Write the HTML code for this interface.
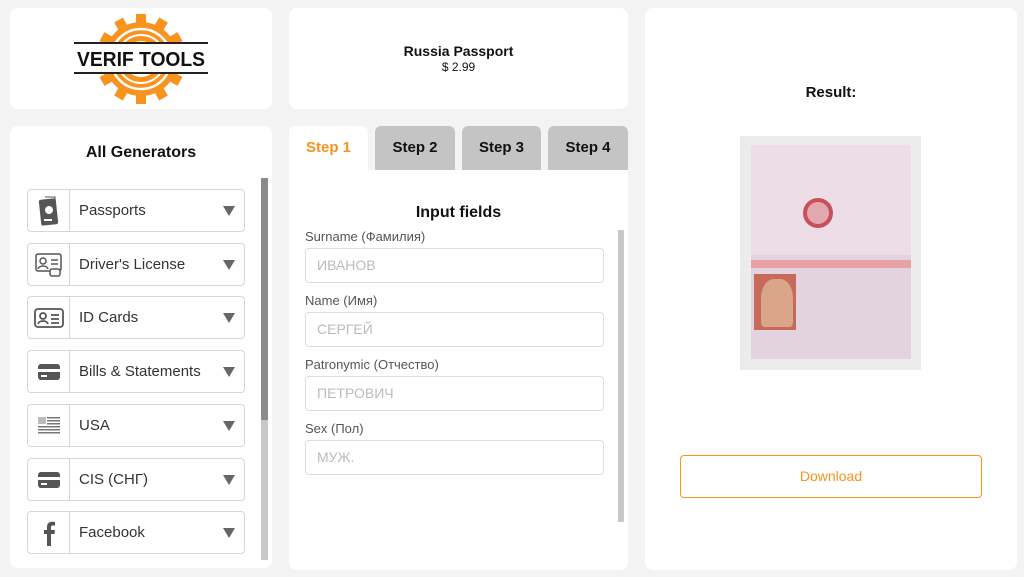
<!DOCTYPE html>
<html><head><meta charset="utf-8"><style>
*{box-sizing:border-box;margin:0;padding:0}
body{width:1024px;height:577px;background:#f3f3f3;font-family:"Liberation Sans",sans-serif;position:relative;overflow:hidden;color:#111}
.card{position:absolute;background:#fff;border-radius:8px}
.item{position:absolute;left:27px;width:218px;height:43px;border:1px solid #d6d6d6;border-radius:4px;background:#fff}
.item .ic{position:absolute;left:0;top:0;width:42px;height:41px;border-right:1px solid #d6d6d6;display:flex;align-items:center;justify-content:center}
.item .t{position:absolute;left:51px;top:12px;font-size:15px;color:#333}
.item .a{position:absolute;right:9px;top:16px;width:0;height:0;border-left:6px solid transparent;border-right:6px solid transparent;border-top:10px solid #666}
.tab{position:absolute;top:126px;height:44px;width:80px;background:#c4c4c4;border-radius:6px 6px 0 0;font-weight:bold;font-size:15px;text-align:center;line-height:44px}
.lbl{position:absolute;left:305px;font-size:13px;color:#555}
.inp{position:absolute;left:305px;width:299px;height:35px;border:1px solid #ddd;border-radius:4px;font-size:14px;color:#bbb;padding-left:11px;line-height:33px}
</style></head><body>
<div class="card" style="left:10px;top:8px;width:262px;height:101px">
<svg width="262" height="101" style="position:absolute;left:0;top:0">
<defs><rect id="t" x="-5" y="-45" width="10" height="10"/></defs>
<g transform="translate(131,51)" fill="#f7931e">
<circle r="37"/>
<use href="#t"/><use href="#t" transform="rotate(30)"/><use href="#t" transform="rotate(60)"/><use href="#t" transform="rotate(90)"/><use href="#t" transform="rotate(120)"/><use href="#t" transform="rotate(150)"/><use href="#t" transform="rotate(180)"/><use href="#t" transform="rotate(210)"/><use href="#t" transform="rotate(240)"/><use href="#t" transform="rotate(270)"/><use href="#t" transform="rotate(300)"/><use href="#t" transform="rotate(330)"/>
<circle r="30" fill="none" stroke="#fff" stroke-width="2.5"/>
<circle r="24" fill="none" stroke="#fff" stroke-width="2"/>
<circle r="18" fill="#fff"/>
</g>
<rect x="63" y="34" width="136" height="32" fill="#fff"/>
<rect x="64" y="34" width="134" height="2" fill="#222"/>
<rect x="64" y="64" width="134" height="2" fill="#222"/>
<text x="131" y="58" text-anchor="middle" font-family="Liberation Sans" font-weight="bold" font-size="20" fill="#111" textLength="128" lengthAdjust="spacingAndGlyphs">VERIF TOOLS</text>
</svg></div>
<div class="card" style="left:10px;top:126px;width:262px;height:442px">
<div style="position:absolute;top:18px;width:100%;text-align:center;font-weight:bold;font-size:16px">All Generators</div>
<div style="position:absolute;left:251px;top:52px;width:7px;height:382px;background:#c8c8c8"></div>
<div style="position:absolute;left:251px;top:52px;width:7px;height:242px;background:#8a8a8a"></div>
</div>
<div class="item" style="top:189px"><div class="ic"><svg width="22" height="30"><rect x="2" y="3" width="17" height="26" rx="2" fill="#555" transform="rotate(-6 10 16)"/><path d="M7 1h10v4" stroke="#555" fill="none"/><circle cx="11" cy="14" r="4" fill="#fff"/><rect x="6" y="23" width="8" height="2" fill="#fff"/></svg></div><div class="t">Passports</div><div class="a"></div></div>
<div class="item" style="top:243px"><div class="ic"><svg width="28" height="26" fill="none" stroke="#555" stroke-width="1.5"><rect x="1" y="2" width="25" height="17" rx="2"/><circle cx="8" cy="9" r="3"/><path d="M3 17c1-4 9-4 10 0M16 8h7M16 12h7"/><rect x="15" y="17" width="10" height="7" rx="2" fill="#fff"/></svg></div><div class="t">Driver's License</div><div class="a"></div></div>
<div class="item" style="top:296px"><div class="ic"><svg width="30" height="22" fill="none" stroke="#555" stroke-width="1.8"><rect x="1" y="2" width="28" height="18" rx="3"/><circle cx="9" cy="9" r="3"/><path d="M4 17c1-4 9-4 10 0M17 8h8M17 12h8M17 16h8"/></svg></div><div class="t">ID Cards</div><div class="a"></div></div>
<div class="item" style="top:350px"><div class="ic"><svg width="24" height="18"><rect x="1" y="1" width="22" height="16" rx="3" fill="#555"/><rect x="1" y="6" width="22" height="3" fill="#fff"/><rect x="4" y="12" width="6" height="2" fill="#fff"/></svg></div><div class="t">Bills &amp; Statements</div><div class="a"></div></div>
<div class="item" style="top:404px"><div class="ic"><svg width="22" height="20" fill="#777"><rect x="0" y="1" width="8" height="7" fill="#bbb"/><rect x="9" y="1" width="13" height="1.5"/><rect x="9" y="4" width="13" height="1.5"/><rect x="9" y="7" width="13" height="1.5"/><rect x="0" y="10" width="22" height="1.5"/><rect x="0" y="13" width="22" height="1.5"/><rect x="0" y="16" width="22" height="1.5"/></svg></div><div class="t">USA</div><div class="a"></div></div>
<div class="item" style="top:458px"><div class="ic"><svg width="24" height="18"><rect x="1" y="1" width="22" height="16" rx="3" fill="#555"/><rect x="1" y="6" width="22" height="3" fill="#fff"/><rect x="4" y="12" width="6" height="2" fill="#fff"/></svg></div><div class="t">CIS (СНГ)</div><div class="a"></div></div>
<div class="item" style="top:511px"><div class="ic"><svg width="14" height="26"><path d="M9 26V14h3.5l.5-4H9V7.5C9 6.3 9.4 5.5 11 5.5h2V2c-.5 0-1.8-.2-3-.2C7 1.8 5 3.6 5 7v3H2v4h3v12z" fill="#555"/></svg></div><div class="t">Facebook</div><div class="a"></div></div>

<div class="card" style="left:289px;top:8px;width:339px;height:101px;text-align:center">
<div style="margin-top:35px;font-weight:bold;font-size:14px">Russia Passport</div>
<div style="font-size:12px;margin-top:1px">$ 2.99</div></div>
<div class="card" style="left:289px;top:170px;width:339px;height:400px;border-radius:0 0 8px 8px"></div>
<div class="tab" style="left:289px;width:79px;background:#fff;color:#f7931e">Step 1</div>
<div class="tab" style="left:375px">Step 2</div>
<div class="tab" style="left:462px;width:79px">Step 3</div>
<div class="tab" style="left:548px">Step 4</div>
<div style="position:absolute;left:289px;top:204px;width:339px;text-align:center;font-weight:bold;font-size:16px">Input fields</div>
<div style="position:absolute;left:618px;top:230px;width:6px;height:292px;background:#c8c8c8"></div>
<div class="lbl" style="top:229px">Surname (Фамилия)</div><div class="inp" style="top:248px">ИВАНОВ</div>
<div class="lbl" style="top:293px">Name (Имя)</div><div class="inp" style="top:312px">СЕРГЕЙ</div>
<div class="lbl" style="top:357px">Patronymic (Отчество)</div><div class="inp" style="top:376px">ПЕТРОВИЧ</div>
<div class="lbl" style="top:421px">Sex (Пол)</div><div class="inp" style="top:440px">МУЖ.</div>

<div class="card" style="left:645px;top:8px;width:372px;height:562px">
<div style="position:absolute;top:76px;width:100%;text-align:center;font-weight:bold;font-size:15px">Result:</div>
<div style="position:absolute;left:95px;top:128px;width:181px;height:234px;background:#ececec">
<div style="position:absolute;left:11px;top:9px;width:160px;height:110px;background:#ecdde6;border-radius:3px 3px 0 0"></div>
<div style="position:absolute;left:11px;top:119px;width:160px;height:104px;background:#e2d3df"></div>
<div style="position:absolute;left:11px;top:124px;width:160px;height:8px;background:#e8a2a6"></div>
<div style="position:absolute;left:63px;top:62px;width:30px;height:30px;border-radius:50%;border:4px solid #c9505a;background:#e2a8b0"></div>
<div style="position:absolute;left:14px;top:138px;width:42px;height:56px;background:#c86a5a"></div>
<div style="position:absolute;left:21px;top:143px;width:32px;height:48px;background:#d9a689;border-radius:40% 40% 10% 10%"></div>
</div>
<div style="position:absolute;left:35px;top:447px;width:302px;height:43px;border:1px solid #f7931e;border-radius:4px;text-align:center;line-height:41px;color:#f7931e;font-size:14px">Download</div>
</div>
</body></html>
